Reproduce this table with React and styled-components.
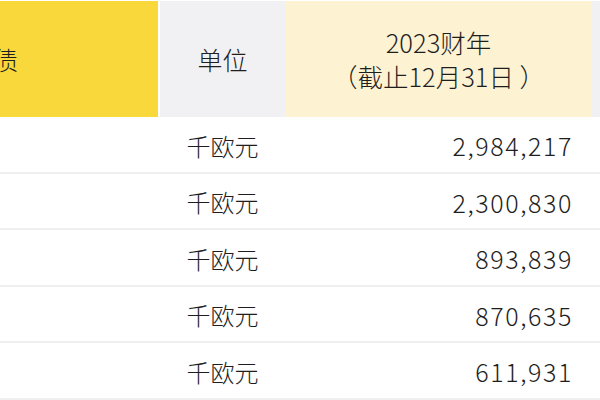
import React from 'react';
import styled, { createGlobalStyle } from 'styled-components';

const GlobalStyle = createGlobalStyle`
    html, body {
        margin: 0;
        padding: 0;
        background: #fff;
        overflow: hidden;
    }
    body {
        font-family: "Noto Sans CJK SC", "Noto Sans", sans-serif;
        font-weight: 300;
        color: #1e1e1e;
    }
`

const Table = styled.div`
    width: 600px;
    padding-top: 1px;
`

const Row = styled.div`
    display: grid;
    grid-template-columns: 160px 125px 307px 1fr;
    height: ${p => (p.head ? '116px' : '56.5px')};
    box-sizing: border-box;
    border-bottom: ${p => (p.head ? 'none' : '2px solid #efeff0')};
`

const HeadCell = styled.div`
    display: flex;
    flex-direction: column;
    align-items: center;
    justify-content: center;
    background: ${p => p.bg};
    font-size: 25px;
    line-height: 34px;
    overflow: hidden;
    white-space: nowrap;
`

const YearLine = styled.span`
    display: block;
    height: 34px;
    font-size: 25.5px;
    line-height: 34px;
`

const NameCell = styled(HeadCell)`
    flex-direction: row;
    justify-content: flex-end;
    padding-right: 140px;
    border-right: 2px solid #fff;
`

const UnitCell = styled.div`
    display: flex;
    align-items: center;
    justify-content: center;
    font-size: 24px;
    padding-top: 2px;
`

const ValueCell = styled.div`
    display: flex;
    align-items: center;
    justify-content: flex-end;
    padding-right: 19px;
    padding-top: 2px;
    font-size: 25px;
    letter-spacing: 1.6px;
`

const rows = ['2,984,217', '2,300,830', '893,839', '870,635', '611,931'];

export default function App() {
    return (
        <>
            <GlobalStyle />
            <Table>
                <Row head>
                    <NameCell bg="#f9d83c">资产负债</NameCell>
                    <HeadCell bg="#f1f1f3">单位</HeadCell>
                    <HeadCell bg="#fdf2d2">
                        <YearLine>2023财年</YearLine>
                        <YearLine>（截止12月31日 ）</YearLine>
                    </HeadCell>
                    <HeadCell bg="#f1f1f3" />
                </Row>
                {rows.map(v => (
                    <Row key={v}>
                        <div />
                        <UnitCell>千欧元</UnitCell>
                        <ValueCell>{v}</ValueCell>
                        <div />
                    </Row>
                ))}
            </Table>
        </>
    );
}
